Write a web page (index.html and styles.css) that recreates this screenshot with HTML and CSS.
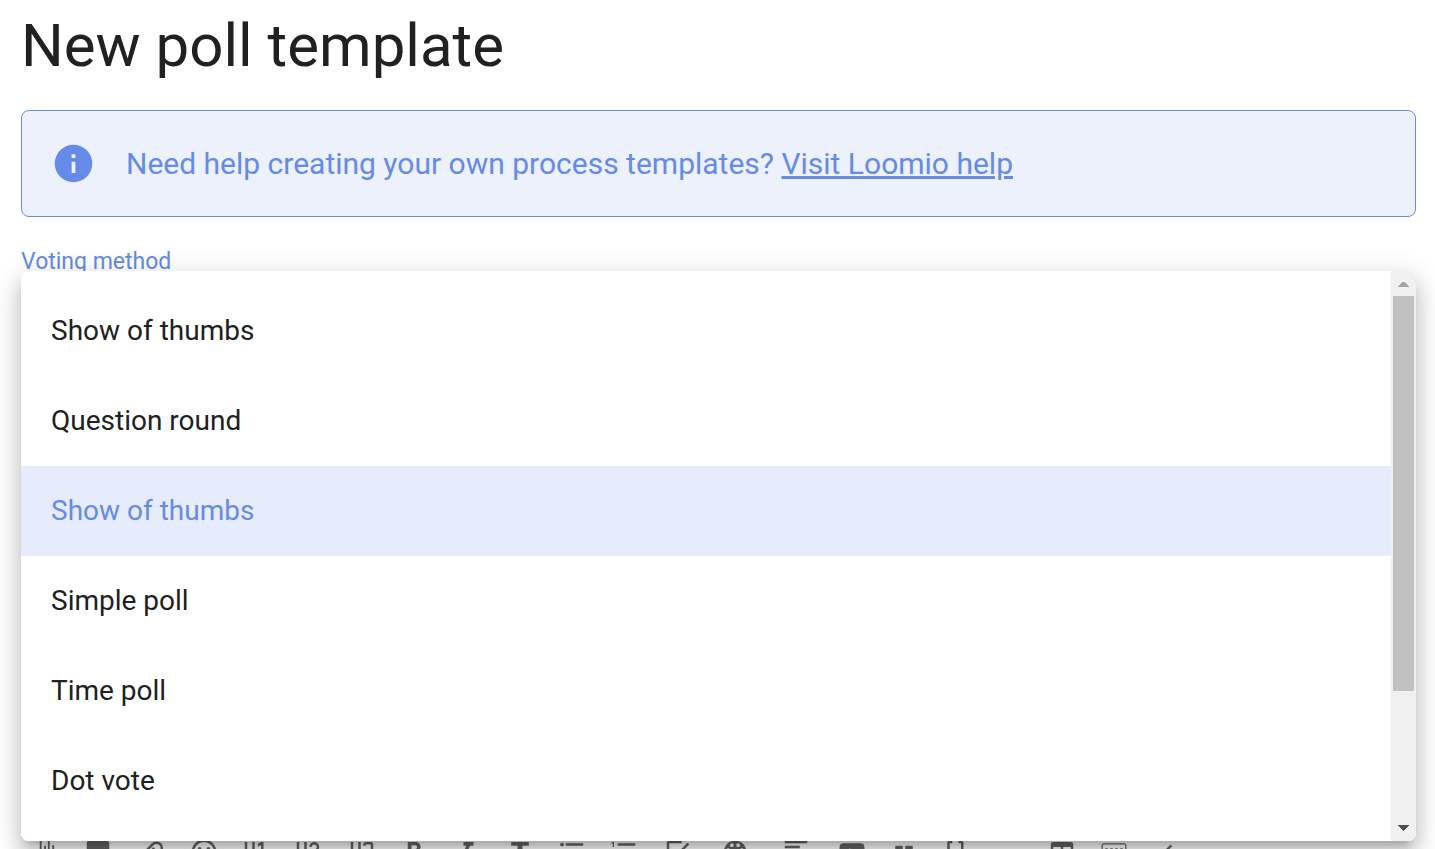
FILE: index.html
```html
<!DOCTYPE html>
<html lang="en">
<head>
<meta charset="utf-8">
<title>New poll template</title>
<link rel="stylesheet" href="styles.css">
</head>
<body>
<main class="page">
  <h1 class="title">New poll template</h1>
  <div class="alert" role="note">
    <svg class="alert-icon" viewBox="0 0 24 24" aria-hidden="true"><path d="M13,9H11V7H13M13,17H11V11H13M12,2A10,10 0 0,0 2,12A10,10 0 0,0 12,22A10,10 0 0,0 22,12A10,10 0 0,0 12,2Z"/></svg>
    <p class="alert-text">Need help creating your own process templates? <a href="#">Visit Loomio help</a></p>
  </div>
  <section class="field">
    <span class="label" id="method-label">Voting method</span>
    <div class="menu">
      <ul class="options" role="listbox" aria-labelledby="method-label">
        <li class="option" role="option">Show of thumbs</li>
        <li class="option" role="option">Question round</li>
        <li class="option selected" role="option" aria-selected="true">Show of thumbs</li>
        <li class="option" role="option">Simple poll</li>
        <li class="option" role="option">Time poll</li>
        <li class="option" role="option">Dot vote</li>
      </ul>
      <div class="scrollbar">
        <button class="arrow up" aria-label="Scroll up"><svg viewBox="0 0 25 25"><path d="M7 16h11v-1h-1v-1h-1v-1h-1v-1h-1v-1h-3v1h-1v1h-1v1h-1v1h-1z"/></svg></button>
        <div class="track"><div class="thumb"></div></div>
        <button class="arrow" aria-label="Scroll down"><svg viewBox="0 0 25 25"><path d="M7 9h11v1h-1v1h-1v1h-1v1h-1v1h-1v1h-1v-1h-1v-1h-1v-1h-1v-1h-1v-1h-1z"/></svg></button>
      </div>
    </div>
  </section>
  <div class="toolbar" role="toolbar" aria-label="Formatting">
    <div class="group">
      <button class="tool" aria-label="Record"><svg viewBox="0 0 24 24"><path d="M7 3h1.500v18H7zM10.500 7H12v12h-1.500zM13.500 3H15v18h-1.500zM17 6.500h1.500v10H17z"/></svg></button>
      <button class="tool" aria-label="Image"><svg viewBox="0 0 24 24"><path d="M8.500,13.500L11,16.500L14.500,12L19,18H5M21,19V5C21,3.890 20.100,3 19,3H5A2,2 0 0,0 3,5V19A2,2 0 0,0 5,21H19A2,2 0 0,0 21,19Z"/></svg></button>
      <button class="tool" aria-label="Attachment"><svg viewBox="0 0 24 24"><path class="line" d="M6.500 13.500l7.700-7.700a4.200 4.200 0 0 1 6 6l-8.500 8.500a2.700 2.700 0 0 1-3.900-3.900l7.600-7.600"/></svg></button>
    </div>
    <div class="group">
      <button class="tool" aria-label="Emoji"><svg viewBox="0 0 24 24"><circle class="line" cx="12" cy="12" r="9"/><circle cx="8.500" cy="9.500" r="1.500"/><circle cx="15.500" cy="9.500" r="1.500"/><path d="M7 14h10a5 5 0 0 1-10 0z"/></svg></button>
      <button class="tool" aria-label="Heading 1"><svg viewBox="0 0 24 24"><path d="M3,4H5V10H9V4H11V18H9V12H5V18H3V4M14,18V16H16V6.310L13.500,7.750V5.440L16,4H18V16H20V18H14Z"/></svg></button>
      <button class="tool" aria-label="Heading 2"><svg viewBox="0 0 24 24"><path d="M3,4H5V10H9V4H11V18H9V12H5V18H3V4M21,18H15A2,2 0 0,1 13,16C13,15.470 13.200,15 13.540,14.640L18.410,9.410C18.780,9.050 19,8.550 19,8A2,2 0 0,0 17,6A2,2 0 0,0 15,8H13A4,4 0 0,1 17,4A4,4 0 0,1 21,8C21,9.100 20.550,10.100 19.830,10.830L15,16H21V18Z"/></svg></button>
    </div>
    <div class="group">
      <button class="tool" aria-label="Heading 3"><svg viewBox="0 0 24 24"><path d="M3,4H5V10H9V4H11V18H9V12H5V18H3V4M15,4H19A2,2 0 0,1 21,6V16A2,2 0 0,1 19,18H15A2,2 0 0,1 13,16V15H15V16H19V12H15V10H19V6H15V7H13V6A2,2 0 0,1 15,4Z"/></svg></button>
      <button class="tool" aria-label="Bold"><svg viewBox="0 0 24 24"><path d="M13.500,15.500H10V12.500H13.500A1.500,1.500 0 0,1 13.500,15.500M10,6.500H13A1.500,1.500 0 0,1 13,9.500H10M15.600,10.790C16.570,10.110 17.250,9 17.250,8C17.250,5.740 15.500,4 13.250,4H7V18H14.040C16.140,18 17.750,16.300 17.750,14.210C17.750,12.690 16.890,11.390 15.600,10.790Z"/></svg></button>
      <button class="tool" aria-label="Italic"><svg viewBox="0 0 24 24"><path d="M10,4V7H12.210L8.790,15H6V18H14V15H11.790L15.210,7H18V4H10Z"/></svg></button>
    </div>
    <div class="group">
      <button class="tool" aria-label="Strikethrough"><svg viewBox="0 0 24 24"><path d="M5,4V7H10V10H14V7H19V4H5M3,14H21V12H3M10,19H14V16H10V19Z"/></svg></button>
      <button class="tool" aria-label="Bulleted list"><svg viewBox="0 0 24 24"><path d="M7,5H21V7H7V5M7,13V11H21V13H7M7,19V17H21V19H7"/><circle cx="4" cy="6" r="1.500"/><circle cx="4" cy="12" r="1.500"/><circle cx="4" cy="18" r="1.500"/></svg></button>
      <button class="tool" aria-label="Numbered list"><svg viewBox="0 0 24 24"><path d="M7,13V11H21V13H7M7,19V17H21V19H7M7,7V5H21V7H7M3,8V5H2V4H4V8H3M2,17V16H5V20H2V19H4V18H2V17"/></svg></button>
    </div>
    <div class="group">
      <button class="tool" aria-label="Task list"><svg viewBox="0 0 24 24"><path d="M19,19H5V5H15V3H5C3.890,3 3,3.890 3,5V19A2,2 0 0,0 5,21H19A2,2 0 0,0 21,19V11H19M7.910,10.080L6.500,11.500L11,16L21,6L19.590,4.580L11,13.170L7.910,10.080Z"/></svg></button>
      <button class="tool wide" aria-label="Colour"><svg viewBox="0 0 24 24"><path fill-rule="evenodd" d="M12,3A9,9 0 0,0 3,12A9,9 0 0,0 12,21A1.500,1.500 0 0,0 13.500,19.500C13,18.500 13,17 14.500,16.500H16A5,5 0 0,0 21,11.500C21,6.500 17,3 12,3M9.500,5A1.500,1.500 0 1,1 9.500,8A1.500,1.500 0 1,1 9.500,5M14.500,5A1.500,1.500 0 1,1 14.500,8A1.500,1.500 0 1,1 14.500,5M6.500,9A1.500,1.500 0 1,1 6.500,12A1.500,1.500 0 1,1 6.500,9M17.500,9A1.500,1.500 0 1,1 17.500,12A1.500,1.500 0 1,1 17.500,9"/></svg></button>
      <button class="tool wide" aria-label="Alignment"><svg viewBox="0 0 24 24"><path d="M3,3H21V5H3V3M3,7H15V9H3V7M3,11H21V13H3V11M3,15H15V17H3V15M3,19H21V21H3V19Z"/></svg></button>
      <button class="tool" aria-label="Video"><svg viewBox="0 0 24 24"><path d="M10,15L15.190,12L10,9V15M6,5H18C21,5 22,6 22,9V15C22,18 21,19 18,19H6C3,19 2,18 2,15V9C2,6 3,5 6,5Z"/></svg></button>
      <button class="tool" aria-label="Quote"><svg viewBox="0 0 24 24"><path d="M6,17H9L11,13V7H5V13H8M14,17H17L19,13V7H13V13H16L14,17Z"/></svg></button>
      <button class="tool" aria-label="Code block"><svg viewBox="0 0 24 24"><path d="M7,3A2,2 0 0,0 5,5V9A2,2 0 0,1 3,11H2V13H3A2,2 0 0,1 5,15V19A2,2 0 0,0 7,21H9V19H7V14A2,2 0 0,0 5,12A2,2 0 0,0 7,10V5H9V3M16,3A2,2 0 0,1 18,5V9A2,2 0 0,0 20,11H21V13H20A2,2 0 0,0 18,15V19A2,2 0 0,1 16,21H14V19H16V14A2,2 0 0,1 18,12A2,2 0 0,1 16,10V5H14V3H16Z"/></svg></button>
    </div>
    <div class="group">
      <button class="tool" aria-label="Divider"><svg viewBox="0 0 24 24"><path d="M19,13H5V11H19V13Z"/></svg></button>
      <button class="tool" aria-label="Table"><svg viewBox="0 0 24 24"><path d="M5,4H19A2,2 0 0,1 21,6V18A2,2 0 0,1 19,20H5A2,2 0 0,1 3,18V6A2,2 0 0,1 5,4M5,8V12H11V8H5M13,8V12H19V8H13M5,14V18H11V14H5M13,14V18H19V14H13Z"/></svg></button>
      <button class="tool" aria-label="Markdown"><svg viewBox="0 0 24 24"><rect class="thin" x="2.500" y="5.500" width="19" height="13" rx="1.500"/><path d="M5 9h2v2H5zM9 9h2v2H9zM13 9h2v2h-2zM17 9h2v2h-2zM7 14h10v2H7z"/></svg></button>
    </div>
    <div class="group">
      <button class="tool" aria-label="Collapse"><svg viewBox="0 0 24 24"><path d="M15.410,16.580L10.830,12L15.410,7.410L14,6L8,12L14,18L15.410,16.580Z"/></svg></button>
    </div>
  </div>
</main>
</body>
</html>
```
FILE: styles.css
```css
* { box-sizing: border-box; }
body {
  margin: 0;
  height: 100vh;
  overflow: hidden;
  background: #fff;
  color: #212121;
  font-family: Roboto, "Liberation Sans", sans-serif;
}
.page { padding: 0 19px 0 21px; }
.title {
  margin: 0 0 18px;
  font-size: 60px;
  line-height: 92px;
  font-weight: 400;
}
.alert {
  display: flex;
  align-items: center;
  gap: 30px;
  padding: 30px 29px;
  border: 1px solid #658ae7;
  border-radius: 8px;
  background: #edf1fc;
  color: #658ae7;
}
.alert-icon { width: 45px; height: 45px; fill: currentColor; flex: none; }
.alert-text { margin: 0; font-size: 30px; line-height: 45px; }
.alert-text a { color: inherit; text-decoration: underline; }
.field { position: relative; height: 590px; margin-top: 30px; }
.label { display: block; font-size: 23px; line-height: 30px; color: #658ae7; }
.menu {
  position: absolute;
  z-index: 1;
  top: 24px;
  left: 0;
  right: 0;
  display: flex;
  height: 570px;
  overflow: hidden;
  border-radius: 8px;
  background: #fff;
}
.field::after {
  content: "";
  position: absolute;
  top: 24px;
  left: 0;
  right: 0;
  height: 570px;
  border-radius: 8px;
  box-shadow: 0 9px 9px -6px rgba(0,0,0,.2), 0 15px 19px 2px rgba(0,0,0,.14), 0 6px 26px 4px rgba(0,0,0,.12);
}
.options { flex: 1; margin: 0; padding: 15px 0; list-style: none; }
.option { padding: 0 30px; font-size: 28px; line-height: 90px; }
.selected { background: #e6ecfc; color: #658ae7; }
.scrollbar { display: flex; flex-direction: column; width: 25px; background: #f0f0f0; }
.arrow { width: 25px; height: 25px; padding: 0; border: 0; background: none; fill: #505050; }
.up { fill: #a3a3a3; }
.arrow svg { display: block; }
.track { flex: 1; padding: 0 2px; }
.thumb { height: 76%; background: #c1c1c1; }
.toolbar { display: flex; gap: 2px; margin-left: -1px; }
.group { display: flex; }
.tool {
  display: flex;
  justify-content: center;
  width: 52px;
  padding: 0;
  border: 0;
  background: none;
  fill: #666;
}
.wide { width: 61px; }
.tool svg { width: 30px; height: 30px; }
.line, .thin { fill: none; stroke: #666; stroke-width: 2; }
.thin { stroke-width: 1; }
```
